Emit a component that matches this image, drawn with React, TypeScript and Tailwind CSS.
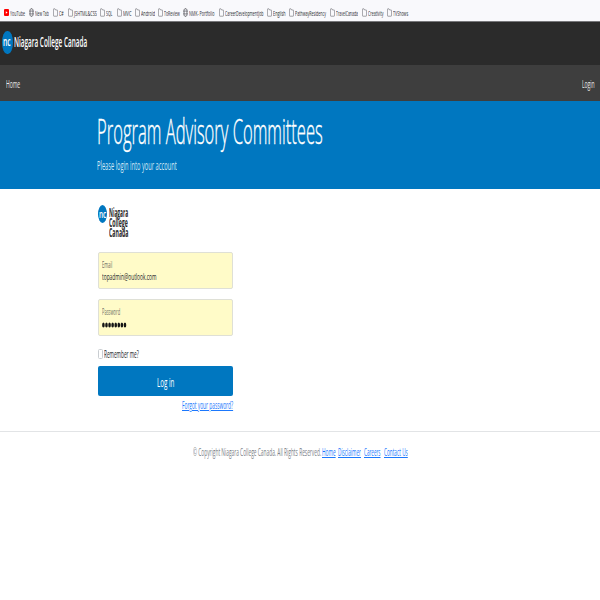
import { useLayoutEffect, useRef, useState } from "react";
import type { ReactNode } from "react";

/* A line of text condensed horizontally to fill the width of its box. */
function Fit({ className = "", inner = "", children }: { className?: string; inner?: string; children: ReactNode }) {
  const box = useRef<HTMLSpanElement>(null);
  const text = useRef<HTMLSpanElement>(null);
  const [scale, setScale] = useState(1);
  useLayoutEffect(() => {
    if (box.current && text.current) {
      const wanted = box.current.getBoundingClientRect().width;
      setScale(wanted / text.current.offsetWidth);
    }
  }, []);
  return (
    <span ref={box} className={`block shrink-0 whitespace-nowrap text-left ${className}`}>
      <span ref={text} className={`inline-block origin-left ${inner}`} style={{ transform: `scaleX(${scale})` }}>
        {children}
      </span>
    </span>
  );
}

function FolderIcon() {
  return (
    <svg className="h-[9px] w-[5px] shrink-0" viewBox="0 0 5 9" fill="none" stroke="#66666c" strokeWidth="0.6">
      <path d="M.4 1.4Q.4.8.9.8H1.9L2.6 2H4.1Q4.6 2 4.6 2.7V7.5Q4.6 8.2 4.1 8.2H.9Q.4 8.2.4 7.5Z" />
    </svg>
  );
}

function GlobeIcon() {
  return (
    <svg className="h-[9px] w-[5px] shrink-0" viewBox="0 0 5 9" fill="none" stroke="#55555b" strokeWidth="0.5">
      <ellipse cx="2.5" cy="4.5" rx="2.2" ry="4" />
      <ellipse cx="2.5" cy="4.5" rx="1" ry="4" />
      <path d="M.4 3.2H4.6M.4 5.8H4.6" />
    </svg>
  );
}

function YouTubeIcon() {
  return (
    <svg className="h-[7px] w-[5px] shrink-0" viewBox="0 0 5 7">
      <rect width="5" height="7" rx="1" fill="#f00" />
      <path d="M1.8 2.2L3.6 3.5L1.8 4.8Z" fill="#fff" />
    </svg>
  );
}

const bookmarks = [
  { label: "YouTube", icon: "yt", item: "w-[25px]", text: "w-[15px]" },
  { label: "New Tab", icon: "globe", item: "w-[24px]", text: "w-[14px]" },
  { label: "C#", icon: "folder", item: "w-[14.5px]", text: "w-[4.5px]" },
  { label: "JSHTML&CSS", icon: "folder", item: "w-[32.5px]", text: "w-[23px]" },
  { label: "SQL", icon: "folder", item: "w-[16.5px]", text: "w-[6.5px]" },
  { label: "MVC", icon: "folder", item: "w-[18px]", text: "w-[8.5px]" },
  { label: "Android", icon: "folder", item: "w-[23.5px]", text: "w-[14px]" },
  { label: "ToReview", icon: "folder", item: "w-[25px]", text: "w-[15.5px]" },
  { label: "NMK- Portfolio", icon: "globe", item: "w-[35.5px]", text: "w-[25.5px]" },
  { label: "CareerDevelopmentJob", icon: "folder", item: "w-[48.5px]", text: "w-[38.5px]" },
  { label: "English", icon: "folder", item: "w-[22px]", text: "w-[12.5px]" },
  { label: "PathwayResidency", icon: "folder", item: "w-[40.5px]", text: "w-[31px]" },
  { label: "TravelCanada", icon: "folder", item: "w-[32px]", text: "w-[22px]" },
  { label: "Creativity", icon: "folder", item: "w-[25.5px]", text: "w-[15.5px]" },
  { label: "TVShows", icon: "folder", item: "w-[22px]", text: "w-[15px]" },
];

function Field({ label, labelWidth, children }: { label: string; labelWidth: string; children: ReactNode }) {
  return (
    <div className="h-[37px] w-[135px] rounded-[2px] border border-[#dfe0d6] bg-[#fffbc8] pl-[3px] pt-[5.5px]">
      <Fit className={`text-[8.5px] leading-[12px] text-[#6d6d62] ${labelWidth}`}>{label}</Fit>
      {children}
    </div>
  );
}

const link = "text-[#1b78fd] underline decoration-1 underline-offset-1";

export default function App() {
  return (
    <div className="h-[600px] w-[600px] overflow-hidden bg-white font-['Open_Sans','Noto_Sans',sans-serif] text-[#212529]">
      <div className="flex h-[22px] items-center border-b border-[#77777a] bg-[#f9f9fc] pl-1 pt-[4px]">
        {bookmarks.map((b) => (
          <div key={b.label} className={`flex shrink-0 items-center gap-[1px] ${b.item}`}>
            {b.icon === "yt" ? <YouTubeIcon /> : b.icon === "globe" ? <GlobeIcon /> : <FolderIcon />}
            <Fit className={`text-[8px] leading-[10px] text-[#29292f] ${b.text}`}>{b.label}</Fit>
          </div>
        ))}
      </div>

      <header className="flex h-[43px] items-start gap-[1.5px] bg-[#2b2b2b] pl-[2px] pt-[8.5px]">
        <div className="flex h-[23.5px] w-[10.5px] items-center rounded-[50%] bg-[#0077c0] pl-[1px]">
          <Fit className="w-[8px] text-[12px] leading-[20px] text-white" inner="font-semibold">nc</Fit>
        </div>
        <Fit className="mt-[2px] w-[73px] text-[14px] leading-[17px] text-white" inner="font-semibold">
          Niagara College Canada
        </Fit>
      </header>

      <nav className="flex h-[36px] items-center justify-between bg-[#3e3e3e] pl-[6px] pr-[6px] pt-[2px] text-[10px] leading-[14px] text-[#e9e9e9]">
        <Fit className="w-[14px]">Home</Fit>
        <Fit className="w-[12.5px]">Login</Fit>
      </nav>

      <section className="h-[88px] bg-[#0077c0] pl-[97px] pt-[8px] text-white">
        <Fit className="w-[226px] text-[35px] font-light leading-[44px]" inner="[-webkit-text-stroke:0.4px_#fff]">
          Program Advisory Committees
        </Fit>
        <Fit className="mt-[5px] w-[80px] text-[12px] leading-[16px] text-[#d3e8f5]">
          Please login into your account
        </Fit>
      </section>

      <main className="ml-[98px] flex h-[242px] w-[135px] flex-col pt-[15px]">
        <div className="flex h-[48px] shrink-0 gap-[1.5px]">
          <div className="mt-px flex h-[18px] w-[9px] items-center rounded-[50%] bg-[#0077c0] pl-[1px]">
            <Fit className="w-[7px] text-[10px] leading-[16px] text-white" inner="font-semibold">nc</Fit>
          </div>
          <div className="mt-[4px] text-[11.5px] font-bold leading-[10px] text-[#2c2c2c]">
            <Fit className="h-[10px] w-[19px]">Niagara</Fit>
            <Fit className="h-[10px] w-[19px]">College</Fit>
            <Fit className="h-[10px] w-[19.5px]">Canada</Fit>
          </div>
        </div>

        <div className="flex flex-col gap-[10px]">
          <Field label="Email" labelWidth="w-[10.5px]">
            <Fit className="w-[54.5px] text-[9.5px] leading-[12px]">topadmin@outlook.com</Fit>
          </Field>
          <Field label="Password" labelWidth="w-[18px]">
            <svg className="mt-[4px] h-[6px] w-[25px]" viewBox="0 0 25 6" fill="#151515">
              {Array.from({ length: 8 }, (_, i) => (
                <ellipse key={i} cx={1.4 + i * 3.08} cy="3" rx="1.3" ry="2.6" />
              ))}
            </svg>
          </Field>
        </div>

        <div className="mt-[12px] flex h-[11px] items-center gap-[1px]">
          <span className="h-[10px] w-[5px] rounded-[1.5px] border border-[#c9cdd1] bg-white" />
          <Fit className="w-[35px] text-[10px] leading-[12px]">Remember me?</Fit>
        </div>

        <button className="mt-[7px] flex h-[30px] shrink-0 items-center justify-center rounded-[2px] bg-[#0077c0] pt-[3px] text-white">
          <Fit className="w-[17.5px] text-[12.5px] leading-[16px]">Log in</Fit>
        </button>
        <Fit className="mt-[2.5px] w-[51px] self-end text-[10px] leading-[13px]" inner={link}>
          Forgot your password?
        </Fit>
      </main>

      <footer className="flex h-[41px] items-center justify-center border-t border-[#e2e4e6] text-[10px] leading-[14px] text-[#7a8086]">
        <Fit className="w-[128px]">© Copyright Niagara College Canada. All Rights Reserved.</Fit>
        <Fit className="ml-px w-[13.5px]" inner={link}>Home</Fit>
        <Fit className="ml-[3px] w-[23px]" inner={link}>Disclaimer</Fit>
        <Fit className="ml-[3px] w-[16.5px]" inner={link}>Careers</Fit>
        <Fit className="ml-[3px] w-[24px]" inner={link}>Contact Us</Fit>
      </footer>
    </div>
  );
}
